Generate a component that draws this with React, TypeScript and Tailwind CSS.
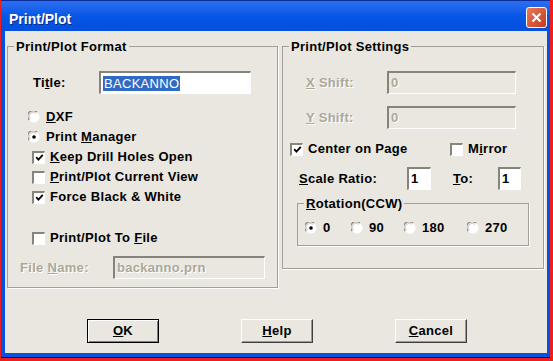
import React from 'react';

const face = 'bg-[#e9e7df]';

const Radio = ({ checked = false }: { checked?: boolean }) => (
  <svg width="12" height="12" viewBox="0 0 12 12" className="shrink-0">
    <circle cx="6" cy="6" r="5.5" fill="#ffffff" />
    <path d="M1.2 9 A5.2 5.2 0 0 1 9 1.2" fill="none" stroke="#8a8880" strokeWidth="1.2" />
    <path d="M2.4 8 A3.8 3.8 0 0 1 8 2.4" fill="none" stroke="#c8c6be" strokeWidth="1" />
    {checked && <circle cx="6" cy="6" r="1.8" fill="#000000" />}
  </svg>
);

const Check = ({ checked = false }: { checked?: boolean }) => (
  <div className="w-[13px] h-[13px] shrink-0 bg-white border-t-2 border-l-2 border-t-[#86847c] border-l-[#86847c] border-b border-r border-b-white border-r-white flex items-center justify-center">
    {checked && (
      <svg width="9" height="9" viewBox="0 0 9 9">
        <path d="M1.2 4.2 L3.4 6.6 L7.8 1.8" fill="none" stroke="#000" strokeWidth="1.8" />
      </svg>
    )}
  </div>
);

const Field = ({
  children,
  className = '',
  disabled = false,
}: {
  children?: React.ReactNode;
  className?: string;
  disabled?: boolean;
}) => (
  <div
    className={`h-[23px] shrink-0 flex items-center px-[2px] border-t-2 border-l-2 border-t-[#85837b] border-l-[#85837b] border-b border-r border-b-white border-r-white ${
      disabled ? `${face} text-[#aca899] [text-shadow:1px_1px_0_#fff]` : 'bg-white'
    } ${className}`}
  >
    {children}
  </div>
);

const Legend = ({ children }: { children: React.ReactNode }) => (
  <legend className="ml-[6px] px-[2px] leading-[15px]">{children}</legend>
);

const Dim = ({ children }: { children: React.ReactNode }) => (
  <span className="text-[#aca899] [text-shadow:1px_1px_0_#fff]">{children}</span>
);

const Btn = ({ children, main = false }: { children: React.ReactNode; main?: boolean }) => (
  <button
    className={`w-[72px] h-[24px] ${face} flex items-center justify-center ${
      main
        ? 'border border-black shadow-[inset_1px_1px_0_#fff,inset_-1px_-1px_0_#808080]'
        : 'border border-t-white border-l-white border-b-[#404040] border-r-[#404040] shadow-[inset_-1px_-1px_0_#9a988f]'
    }`}
  >
    {children}
  </button>
);

export default function App() {
  return (
    <div className="w-[553px] h-[361px] bg-[#f21c1c] pl-[1px] pr-[3px] pb-[3px] font-['Liberation_Sans',Arial,sans-serif] text-[13px] font-bold tracking-[0.3px] text-black select-none">
      <div className="h-full flex flex-col bg-[#0552e2] border-t border-t-[#0b2d9c] border-b border-b-[#00137e]">
        {/* title bar */}
        <div className="h-[30px] flex items-start justify-between pl-[8px] pr-[3px] bg-gradient-to-b from-[#2a6ff0] via-[#0756e6] to-[#0550dc]">
          <span className="mt-[10px] leading-[16px] text-[14px] text-white tracking-normal [text-shadow:1px_1px_0_#0a2a80]">
            Print/Plot
          </span>
          <div className="mt-[6px] w-[21px] h-[21px] rounded-[3px] border border-white bg-gradient-to-br from-[#ea7a55] to-[#c4391a] flex items-center justify-center">
            <svg width="11" height="11" viewBox="0 0 11 11">
              <path d="M1.5 1.5 L9.5 9.5 M9.5 1.5 L1.5 9.5" stroke="#fff" strokeWidth="2" />
            </svg>
          </div>
        </div>

        <div className="flex pl-[4px] pr-[3px]">
          <div className={`w-[542px] h-[322px] ${face} flex flex-col pt-[8px]`}>
            <div className="flex items-start pl-[2px] gap-[4px]">
              {/* left group */}
              <fieldset className="w-[271px] border border-[#a19f96] shadow-[1px_1px_0_#fff] pb-[8px]">
                <Legend>Print/Plot Format</Legend>
                <div className="mt-[17px] h-[23px] flex items-center pl-[25px]">
                  <span className="w-[66px]">
                    Ti<u>t</u>le:
                  </span>
                  <Field className="w-[152px] font-normal">
                    <span className="bg-[#316ac5] text-white px-[1px] leading-[15px]">BACKANNO</span>
                  </Field>
                </div>
                <div className="mt-[13px] h-[20px] flex items-center pl-[20px] gap-[6px]">
                  <Radio />
                  <span>
                    <u>D</u>XF
                  </span>
                </div>
                <div className="h-[20px] flex items-center pl-[20px] gap-[6px]">
                  <Radio checked />
                  <span>
                    Print <u>M</u>anager
                  </span>
                </div>
                <div className="h-[20px] flex items-center pl-[24px] gap-[5px]">
                  <Check checked />
                  <span>
                    <u>K</u>eep Drill Holes Open
                  </span>
                </div>
                <div className="h-[20px] flex items-center pl-[24px] gap-[5px]">
                  <Check />
                  <span>
                    <u>P</u>rint/Plot Current View
                  </span>
                </div>
                <div className="h-[20px] flex items-center pl-[24px] gap-[5px]">
                  <Check checked />
                  <span>Force Black &amp; White</span>
                </div>
                <div className="mt-[21px] h-[20px] flex items-center pl-[24px] gap-[5px]">
                  <Check />
                  <span>
                    Print/Plot To <u>F</u>ile
                  </span>
                </div>
                <div className="mt-[8px] h-[23px] flex items-center pl-[12px]">
                  <span className="w-[93px]">
                    <Dim>
                      File <u>N</u>ame:
                    </Dim>
                  </span>
                  <Field disabled className="w-[152px]">
                    backanno.prn
                  </Field>
                </div>
              </fieldset>

              {/* right group */}
              <fieldset className="w-[262px] border border-[#a19f96] shadow-[1px_1px_0_#fff] pb-[22px]">
                <Legend>Print/Plot Settings</Legend>
                <div className="mt-[17px] h-[23px] flex items-center pl-[23px]">
                  <span className="w-[81px]">
                    <Dim>
                      <u>X</u> Shift:
                    </Dim>
                  </span>
                  <Field disabled className="w-[129px]">
                    0
                  </Field>
                </div>
                <div className="mt-[12px] h-[23px] flex items-center pl-[23px]">
                  <span className="w-[81px]">
                    <Dim>
                      <u>Y</u> Shift:
                    </Dim>
                  </span>
                  <Field disabled className="w-[129px]">
                    0
                  </Field>
                </div>
                <div className="mt-[10px] h-[20px] flex items-center pl-[7px]">
                  <div className="w-[160px] flex items-center gap-[5px]">
                    <Check checked />
                    <span>
                      Center on Pa<u>g</u>e
                    </span>
                  </div>
                  <div className="flex items-center gap-[5px]">
                    <Check />
                    <span>
                      M<u>i</u>rror
                    </span>
                  </div>
                </div>
                <div className="mt-[8px] h-[23px] flex items-center pl-[16px]">
                  <span className="w-[108px]">
                    <u>S</u>cale Ratio:
                  </span>
                  <Field className="w-[24px]">1</Field>
                  <span className="ml-[22px] w-[45px]">
                    <u>T</u>o:
                  </span>
                  <Field className="w-[23px]">1</Field>
                </div>
                <fieldset className="mt-[6px] ml-[14px] w-[232px] border border-[#a19f96] shadow-[1px_1px_0_#fff] pb-[7px]">
                  <Legend>
                    <u>R</u>otation(CCW)
                  </Legend>
                  <div className="mt-[7px] h-[20px] flex items-center pl-[7px]">
                    <div className="w-[46px] flex items-center gap-[6px]">
                      <Radio checked />
                      <span>0</span>
                    </div>
                    <div className="w-[53px] flex items-center gap-[6px]">
                      <Radio />
                      <span>90</span>
                    </div>
                    <div className="w-[63px] flex items-center gap-[6px]">
                      <Radio />
                      <span>180</span>
                    </div>
                    <div className="flex items-center gap-[6px]">
                      <Radio />
                      <span>270</span>
                    </div>
                  </div>
                </fieldset>
              </fieldset>
            </div>

            {/* buttons */}
            <div className="mt-[31px] flex pl-[82px] gap-[82px]">
              <Btn main>
                <span>
                  <u>O</u>K
                </span>
              </Btn>
              <Btn>
                <span>
                  <u>H</u>elp
                </span>
              </Btn>
              <Btn>
                <span>
                  <u>C</u>ancel
                </span>
              </Btn>
            </div>
          </div>
        </div>
        <div className="h-[4px]" />
      </div>
    </div>
  );
}
